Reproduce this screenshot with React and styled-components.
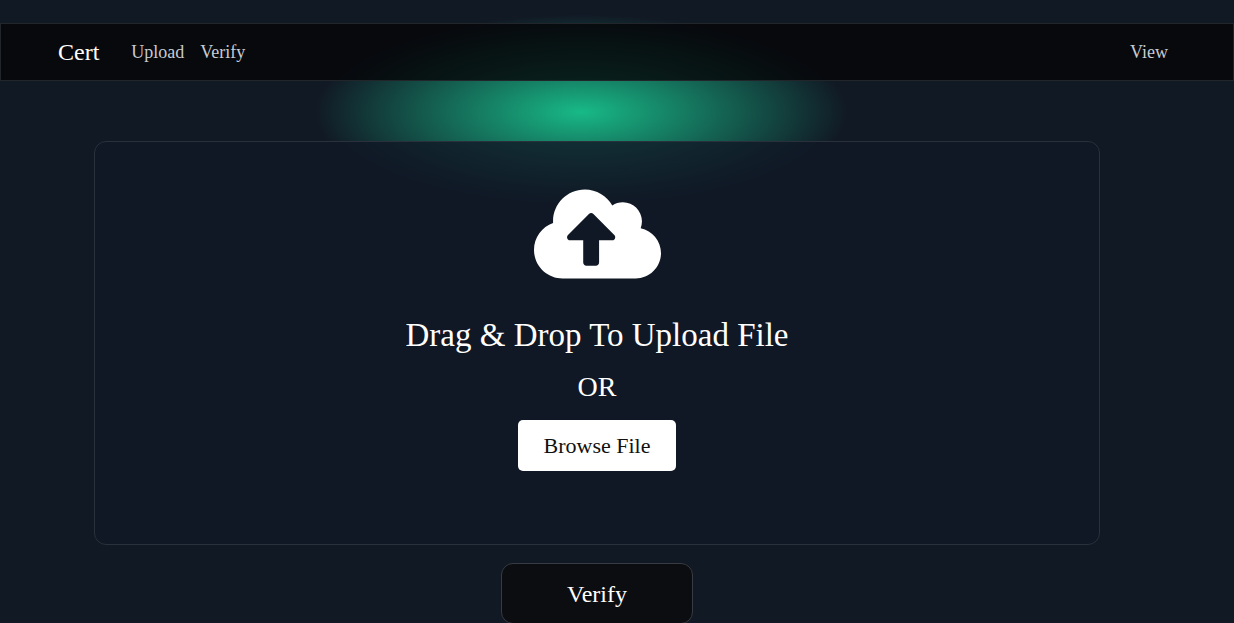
import React from "react";
import styled, { createGlobalStyle } from "styled-components";
import { FaCloudUploadAlt } from "react-icons/fa";

const GlobalStyle = createGlobalStyle`
  *, *::before, *::after { box-sizing: border-box; }
  body {
    margin: 0;
    background: #111925;
    color: #fff;
    font-family: "Liberation Serif", "Times New Roman", serif;
  }
`;

const Page = styled.div`
  position: relative;
  isolation: isolate;
  min-height: 100vh;
  padding-top: 23px;
  overflow: hidden;
  border-bottom: 1px solid #080d19;
`;

const Glow = styled.div`
  position: absolute;
  z-index: -1;
  top: 15px;
  left: calc(50% - 302px);
  width: 532px;
  height: 194px;
  background: radial-gradient(closest-side, #18b987, rgba(24, 185, 135, 0));
`;

const NavBar = styled.nav`
  display: flex;
  align-items: center;
  height: 58px;
  padding: 0 65px 0 57px;
  background: rgba(5, 5, 8, 0.8);
  border: 1px solid #22252a;
`;

const Brand = styled.a`
  margin-right: 32px;
  color: #fff;
  font-size: 24px;
  line-height: 32px;
  text-decoration: none;
`;

const NavLinks = styled.div`
  display: flex;
  flex: 1;
  gap: 16px;
`;

const NavLink = styled.a`
  color: #c8ccd2;
  font-size: 18px;
  line-height: 24px;
  text-decoration: none;
`;

const Main = styled.main`
  display: flex;
  flex-direction: column;
  align-items: center;
  gap: 18px;
  padding: 60px 134px 0 94px;
`;

const DropZone = styled.section`
  display: flex;
  flex-direction: column;
  align-items: center;
  width: 100%;
  padding: 41px 24px 73px;
  background: rgba(16, 23, 38, 0.8);
  border: 1px solid #2a303c;
  border-radius: 12px;
`;

const CloudIcon = styled(FaCloudUploadAlt)`
  width: 127px;
  height: 102px;
  margin-bottom: 30px;
`;

const Heading = styled.h1`
  margin: 0 0 16px;
  font-size: 33px;
  font-weight: 400;
  line-height: 40px;
`;

const Divider = styled.span`
  margin-bottom: 17px;
  font-size: 28px;
  line-height: 32px;
`;

const BrowseButton = styled.button`
  width: 158px;
  height: 51px;
  border: 0;
  border-radius: 5px;
  background: #fff;
  color: #111;
  font: 400 22px/28px "Liberation Serif", "Times New Roman", serif;
  cursor: pointer;
`;

const VerifyButton = styled.button`
  width: 192px;
  height: 61px;
  border: 1px solid #383b41;
  border-radius: 12px;
  background: #0c0d10;
  color: #fff;
  font: 400 24px/32px "Liberation Serif", "Times New Roman", serif;
  cursor: pointer;
`;

export default function App() {
  return (
    <>
      <GlobalStyle />
      <Page>
        <Glow />
        <NavBar>
          <Brand href="#home">Cert</Brand>
          <NavLinks>
            <NavLink href="#upload">Upload</NavLink>
            <NavLink href="#verify">Verify</NavLink>
          </NavLinks>
          <NavLink href="#view">View</NavLink>
        </NavBar>
        <Main>
          <DropZone>
            <CloudIcon aria-hidden="true" />
            <Heading>Drag &amp; Drop To Upload File</Heading>
            <Divider>OR</Divider>
            <BrowseButton type="button">Browse File</BrowseButton>
          </DropZone>
          <VerifyButton type="button">Verify</VerifyButton>
        </Main>
      </Page>
    </>
  );
}
